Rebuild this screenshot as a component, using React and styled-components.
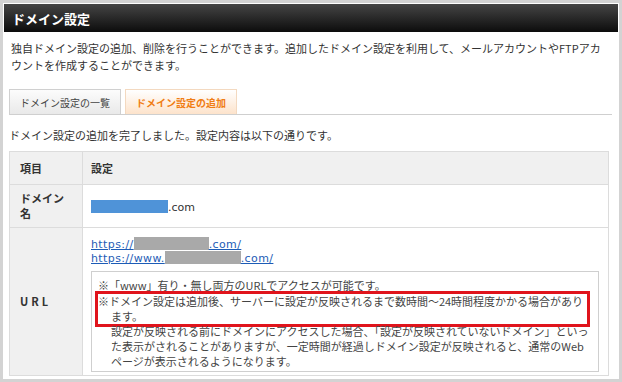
import React from 'react';
import styled, { createGlobalStyle } from 'styled-components';

const GlobalStyle = createGlobalStyle`
  body {
    margin: 0;
    background: #fff;
    font-family: "Noto Sans CJK JP", "Noto Sans", sans-serif;
    color: #333;
  }
`;

const Panel = styled.div`
  width: 614px;
  height: 374px;
  border: 3px solid #d3d3d3;
  padding: 1px;
  overflow: hidden;
  background: #fff;
`;

const Header = styled.h1`
  margin: 0;
  height: 28px;
  padding: 0 8px;
  display: flex;
  align-items: center;
  background: linear-gradient(#454545, #0c0c0c);
  color: #fff;
  font-size: 13px;
  font-weight: bold;
`;

const Body = styled.div`
  padding: 8px 4px 0 5px;
`;

const Lead = styled.p`
  margin: 0 0 15px 2px;
  font-size: 11px;
  line-height: 17px;
  width: 595px;
`;

const Tabs = styled.div`
  display: flex;
  gap: 4px;
  padding-left: 0;
  border-bottom: 1px solid #cfcfcf;
  width: 603px;
`;

const Tab = styled.div`
  height: 24px;
  padding: 0 10px;
  display: flex;
  align-items: center;
  font-size: 10px;
  border: 1px solid ${p => (p.$active ? '#f3d9c0' : '#d0d0d0')};
  border-bottom: none;
  background: ${p => (p.$active ? 'linear-gradient(#fff, #fde3cb)' : 'linear-gradient(#fcfcfc, #e9e9e9)')};
  color: ${p => (p.$active ? '#f07d14' : '#444')};
  font-weight: ${p => (p.$active ? 'bold' : 'normal')};
`;

const Done = styled.p`
  margin: 13px 0 8px 0;
  font-size: 11px;
  line-height: 15px;
`;

const Table = styled.table`
  width: 600px;
  border-collapse: collapse;
  font-size: 11px;
`;

const Th = styled.th`
  height: 32px;
  padding: 0 10px 0 ${p => (p.$first ? '10px' : '8px')};
  text-align: left;
  background: #f0f0f0;
  border: 1px solid #dcdcdc;
  font-weight: bold;
  width: ${p => (p.$first ? '52px' : 'auto')};
`;

const Label = styled.th`
  padding: 0 10px;
  text-align: left;
  vertical-align: middle;
  background: #f0f0f0;
  border: 1px solid #dcdcdc;
  font-weight: bold;
  line-height: 15px;
  letter-spacing: ${p => (p.$spaced ? '3px' : '0')};
`;

const Cell = styled.td`
  padding: ${p => (p.$pad || '0 8px')};
  border: 1px solid #dcdcdc;
  vertical-align: ${p => (p.$top ? 'top' : 'middle')};
`;

const Redact = styled.span`
  display: inline-block;
  width: ${p => p.$w}px;
  height: 13px;
  vertical-align: -2px;
  background: ${p => p.$color};
`;

const Com = styled.span`
  font-family: "DejaVu Sans", sans-serif;
  font-size: 11px;
`;

const DomainRow = styled.tr`
  height: 43px;
`;

const UrlRow = styled.tr`
  height: 148px;
`;

const Links = styled.div`
  display: flex;
  flex-direction: column;
  align-items: flex-start;
`;

const Link = styled.a`
  display: block;
  line-height: 14px;
  height: 14px;
  color: #1d5cb6;
  text-decoration: underline;
  font-family: "DejaVu Sans", sans-serif;
  font-size: 11px;
  letter-spacing: 0.4px;
  white-space: nowrap;
`;

const Note = styled.div`
  margin-top: 6px;
  width: 494px;
  border: 1px solid #cfcfcf;
  padding: 6px 6px 2px 6px;
  color: #444;
  line-height: 15px;
`;

const Item = styled.div`
  padding-left: 13px;
  text-indent: ${p => (p.$indent ? '0' : '-13px')};
  white-space: nowrap;
`;

const Marked = styled.div`
  margin: -2px 2px -3px -3px;
  border: 3px solid #e0141c;
`;

export default function App() {
  return (
    <>
      <GlobalStyle />
      <Panel>
        <Header>ドメイン設定</Header>
        <Body>
          <Lead>
            独自ドメイン設定の追加、削除を行うことができます。追加したドメイン設定を利用して、メールアカウントやFTPアカ<br />
            ウントを作成することができます。
          </Lead>
          <Tabs>
            <Tab>ドメイン設定の一覧</Tab>
            <Tab $active>ドメイン設定の追加</Tab>
          </Tabs>
          <Done>ドメイン設定の追加を完了しました。設定内容は以下の通りです。</Done>
          <Table>
            <tbody>
              <tr>
                <Th $first>項目</Th>
                <Th>設定</Th>
              </tr>
              <DomainRow>
                <Label>ドメイン<br />名</Label>
                <Cell>
                  <Redact $w={77} $color="#4f93d8" /><Com>.com</Com>
                </Cell>
              </DomainRow>
              <UrlRow>
                <Label $spaced>URL</Label>
                <Cell $top $pad="9px 8px 0 8px">
                  <Links>
                    <Link href="#">https://<Redact $w={75} $color="#a9a9a9" />.com/</Link>
                    <Link href="#">https://www.<Redact $w={76} $color="#a9a9a9" />.com/</Link>
                  </Links>
                  <Note>
                    <Item>※「www」有り・無し両方のURLでアクセスが可能です。</Item>
                    <Marked>
                      <Item>※ドメイン設定は追加後、サーバーに設定が反映されるまで数時間～24時間程度かかる場合があり<br />ます。</Item>
                    </Marked>
                    <Item $indent>
                      設定が反映される前にドメインにアクセスした場合、「設定が反映されていないドメイン」といっ<br />
                      た表示がされることがありますが、一定時間が経過しドメイン設定が反映されると、通常のWeb<br />
                      ページが表示されるようになります。
                    </Item>
                  </Note>
                </Cell>
              </UrlRow>
            </tbody>
          </Table>
        </Body>
      </Panel>
    </>
  );
}
